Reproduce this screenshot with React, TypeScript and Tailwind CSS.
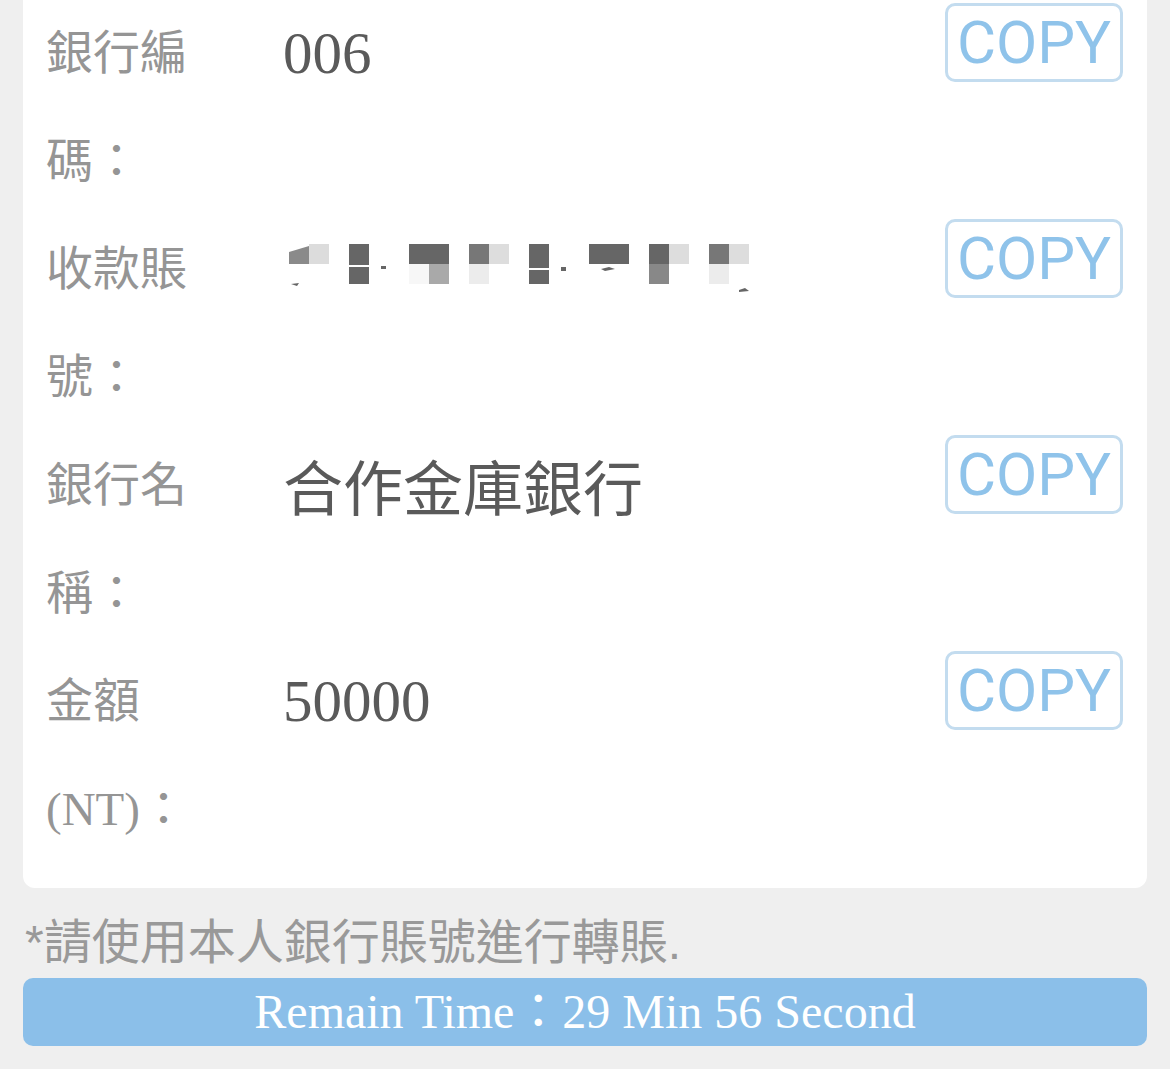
import React from "react";

const blocks: [number, number, number, number, string][] = [
  [26, 0, 20, 20, "#dcdcdc"],
  [66, 0, 20, 40, "#666666"],
  [126, 0, 40, 20, "#666666"],
  [126, 20, 20, 20, "#f7f7f7"],
  [146, 20, 20, 20, "#a9a9a9"],
  [186, 0, 20, 20, "#777777"],
  [206, 0, 20, 20, "#dddddd"],
  [186, 20, 20, 20, "#ececec"],
  [246, 0, 20, 40, "#666666"],
  [306, 0, 40, 20, "#666666"],
  [366, 0, 20, 20, "#666666"],
  [366, 20, 20, 20, "#888888"],
  [386, 0, 20, 20, "#dddddd"],
  [426, 0, 20, 20, "#777777"],
  [446, 0, 20, 20, "#dddddd"],
  [426, 20, 20, 20, "#ececec"],
];

function Mosaic() {
  return (
    <svg width="490" height="50" viewBox="0 0 490 50" className="mt-[29px] block">
      <polygon points="6,8 26,2 26,20 6,20" fill="#8a8a8a" />
      <polygon points="8,40 16,39 14,42" fill="#666" />
      {blocks.map(([x, y, w, h, c], i) => (
        <rect key={i} x={x} y={y} width={w} height={h} fill={c} />
      ))}
      <rect x="66" y="21" width="20" height="2" fill="#fff" />
      <rect x="246" y="24" width="20" height="2" fill="#fff" />
      <rect x="98" y="22" width="5" height="3" fill="#666" />
      <rect x="278" y="23" width="5" height="4" fill="#666" />
      <polygon points="318,25 326,23 332,25 322,27" fill="#666" />
      <polygon points="456,46 462,44 466,47 456,48" fill="#666" />
    </svg>
  );
}

function CopyBtn() {
  return (
    <div className="mt-[4px] flex h-[79px] w-[178px] shrink-0 items-center justify-center rounded-[10px] border-[3px] border-[#c3dcef] bg-white">
      <span className="font-['Roboto','Liberation_Sans',sans-serif] text-[60px] leading-none text-[#8fc3ea]">
        COPY
      </span>
    </div>
  );
}

function Row({ label, children }: { label: React.ReactNode; children: React.ReactNode }) {
  return (
    <div className="flex items-start">
      <div className="w-[145px] shrink-0 text-[47px] leading-[108px] text-[#959595] font-['Liberation_Serif','Noto_Sans_CJK_TC',serif]">
        {label}
      </div>
      <div className="ml-[92px] flex-1 text-[59px] leading-[108px] text-[#5a5a5a] font-['Liberation_Serif','Noto_Sans_CJK_TC',serif]">
        {children}
      </div>
      <CopyBtn />
    </div>
  );
}

export default function App() {
  return (
    <div className="min-h-[1069px] w-full overflow-hidden bg-[#efefef]">
      <div className="mx-[23px] -mt-[1px] rounded-b-[12px] bg-white pl-[23px] pr-[24px] pb-[25px]">
        <Row label="銀行編碼：">006</Row>
        <Row label="收款賬號：">
          <Mosaic />
        </Row>
        <Row label="銀行名稱：">
          <span className="font-['Noto_Sans_CJK_TC',sans-serif] text-[60px]">合作金庫銀行</span>
        </Row>
        <Row label="金額(NT)：">50000</Row>
      </div>
      <div className="mx-[23px] mt-[25px] h-[60px] pl-[2px] text-[48px] leading-[60px] text-[#999999] font-['Liberation_Sans','Noto_Sans_CJK_TC',sans-serif]">
        *請使用本人銀行賬號進行轉賬.
      </div>
      <div className="mx-[23px] mt-[5px] flex h-[68px] items-center justify-center rounded-[10px] bg-[#8bbfe9] text-[48px] leading-none text-white font-['Liberation_Serif','Noto_Sans_CJK_TC',serif]">
        Remain Time：29 Min 56 Second
      </div>
    </div>
  );
}
